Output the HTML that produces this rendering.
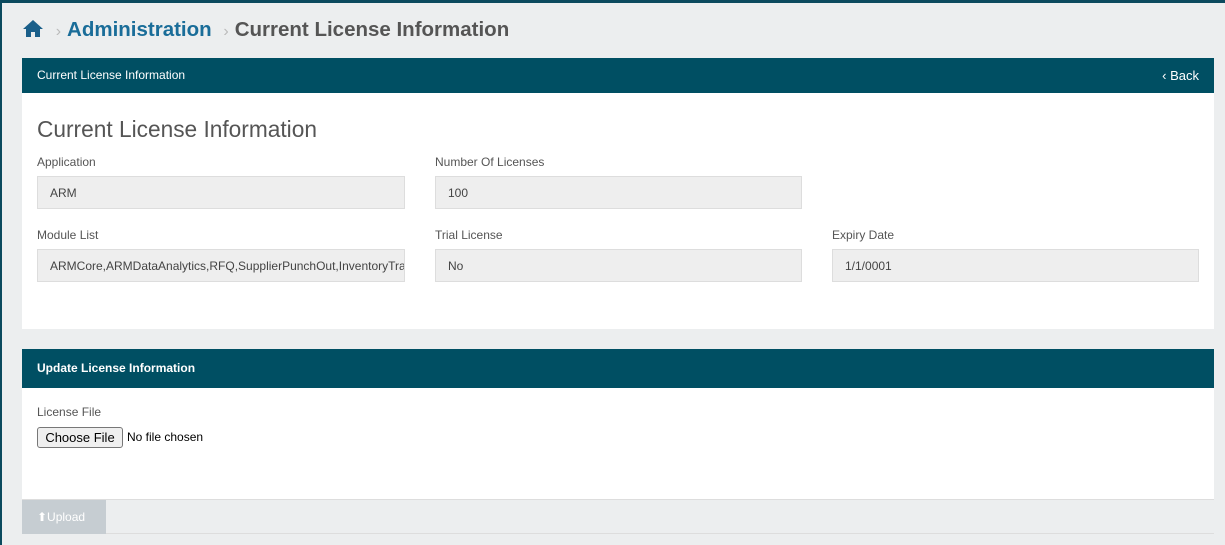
<!DOCTYPE html>
<html><head><style>
*{box-sizing:border-box;margin:0;padding:0}
body{width:1225px;height:545px;background:#eceeef;font-family:"Liberation Sans",sans-serif;position:relative;overflow:hidden}
.a{position:absolute;white-space:nowrap}
.bc{left:22px;top:18px;font-size:20.5px;font-weight:bold}
.hd{background:#004f63;color:#fff;left:22px;width:1192px}
.card{background:#fff;left:22px;width:1192px}
.lbl{font-size:12px;color:#555}
.inp{background:#eeeeee;border:1px solid #ddd;height:33px;font-size:12px;color:#444;padding:9px 12px;overflow:hidden;width:368px}
</style></head><body>
<div class="a" style="left:0;top:0;width:1225px;height:3px;background:#0b4a5e"></div>
<div class="a" style="left:0;top:0;width:2px;height:545px;background:#0b4a5e"></div>
<div class="a bc"><svg width="22" height="19" viewBox="0 0 22 19" style="vertical-align:-2px"><path d="M11 1L1 10h3v8h5v-5h4v5h5v-8h3z" fill="#1a5f8a"/></svg>
<span style="color:#bbb;font-weight:normal;font-size:16px;margin:0 6px">›</span><span style="color:#1a6d99">Administration</span>
<span style="color:#bbb;font-weight:normal;font-size:16px;margin:0 6px">›</span><span style="color:#555">Current License Information</span></div>
<div class="a hd" style="top:58px;height:35px;font-size:12px;padding:10px 15px">Current License Information<span style="float:right;font-size:13px">‹ Back</span></div>
<div class="a card" style="top:93px;height:236px"></div>
<div class="a" style="left:37px;top:116px;font-size:22.7px;color:#555">Current License Information</div>
<div class="a lbl" style="left:37px;top:155px">Application</div>
<div class="a lbl" style="left:435px;top:155px">Number Of Licenses</div>
<div class="a inp" style="left:37px;top:176px">ARM</div>
<div class="a inp" style="left:435px;top:176px;width:367px">100</div>
<div class="a lbl" style="left:37px;top:228px">Module List</div>
<div class="a lbl" style="left:435px;top:228px">Trial License</div>
<div class="a lbl" style="left:832px;top:228px">Expiry Date</div>
<div class="a inp" style="left:37px;top:249px">ARMCore,ARMDataAnalytics,RFQ,SupplierPunchOut,InventoryTracking</div>
<div class="a inp" style="left:435px;top:249px;width:367px">No</div>
<div class="a inp" style="left:832px;top:249px;width:367px">1/1/0001</div>
<div class="a hd" style="top:349px;height:39px;font-size:12px;font-weight:bold;padding:12px 15px">Update License Information</div>
<div class="a card" style="top:388px;height:111px"></div>
<div class="a lbl" style="left:37px;top:405px">License File</div>
<div class="a" style="left:37px;top:427px;width:86px;height:21px;border:1px solid #777;border-radius:3px;background:#efefef;font-size:13px;padding:2px 0;text-align:center">Choose File</div>
<div class="a" style="left:127px;top:430px;font-size:12px">No file chosen</div>
<div class="a" style="left:22px;top:499px;width:1192px;height:35px;border-top:1px solid #ddd;border-bottom:1px solid #ddd"></div>
<div class="a" style="left:22px;top:500px;width:84px;height:34px;background:#c6cdd2;color:#fff;font-size:12px;padding:10px 15px">⬆Upload</div>
</body></html>
